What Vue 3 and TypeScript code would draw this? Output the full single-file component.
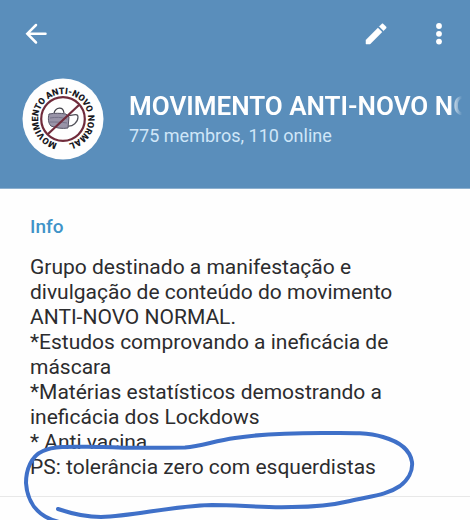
<script setup lang="ts">
interface Group {
  name: string
  members: number
  online: number
  description: string[]
}

const group: Group = {
  name: 'MOVIMENTO ANTI-NOVO NORMAL',
  members: 775,
  online: 110,
  description: [
    'Grupo destinado a manifestação e',
    'divulgação de conteúdo do movimento',
    'ANTI-NOVO NORMAL.',
    '*Estudos comprovando a ineficácia de',
    'máscara',
    '*Matérias estatísticos demostrando a',
    'ineficácia dos Lockdows',
    '* Anti vacina',
    'PS: tolerância zero com esquerdistas',
  ],
}
</script>

<template>
  <div class="page">
    <header class="header">
      <nav class="toolbar">
        <button class="icon-button" type="button" aria-label="Voltar">
          <svg class="icon" viewBox="0 0 28 28">
            <path d="M23.500 13.700H5.500M14 5 5.300 13.700 14 22.500" fill="none" stroke="#fff" stroke-width="2.500" stroke-linecap="round" />
          </svg>
        </button>
        <div class="actions">
          <button class="icon-button" type="button" aria-label="Editar">
            <svg class="icon" viewBox="0 0 28 28">
              <path
                d="M4 19.900V24h4.100L20 12.100 15.900 8zM23.800 8.400c.5-.5.5-1.300 0-1.800l-2.400-2.400c-.5-.5-1.300-.5-1.800 0l-2.300 2.300 4.200 4.200z"
                fill="#fff"
                stroke="#fff"
                stroke-width=".5"
                stroke-linejoin="round"
              />
            </svg>
          </button>
          <button class="icon-button" type="button" aria-label="Mais opções">
            <svg class="icon" viewBox="0 0 28 28" fill="#fff">
              <circle cx="14" cy="6" r="2.900" />
              <circle cx="14" cy="13.800" r="2.900" />
              <circle cx="14" cy="21.600" r="2.900" />
            </svg>
          </button>
        </div>
      </nav>

      <div class="profile">
        <svg class="avatar" viewBox="0 0 82 82">
          <defs>
            <path id="badge-ring" d="M35.300 65.300A25 25 0 1 1 46.200 65.500" />
          </defs>
          <circle cx="41" cy="41" r="40.500" fill="#fefefe" />
          <text class="badge-text">
            <textPath href="#badge-ring">MOVIMENTO ANTI-NOVO NORMAL</textPath>
          </text>
          <path d="M32 35c2-6 9-7 10 0" fill="none" stroke="#404048" stroke-width="1.200" />
          <path d="M46 38c5-1 10-3 10 1 0 5-5 10-11 9" fill="none" stroke="#505058" stroke-width="1.200" />
          <path d="M27 36c6-1 11-1 17 0l3 3-1 11c-6 1-12 0-17-2-3-3-3-8-2-12z" fill="#9994a8" stroke="#565365" />
          <path d="M28 40c6-1 11-1 17 1M28 44c6 0 11 0 17 1" fill="none" stroke="#77738a" />
          <g fill="none" stroke="#702b3b" stroke-width="2.200">
            <circle cx="41" cy="41" r="21.800" />
            <path d="m26 56 31-29" />
          </g>
        </svg>
        <div class="identity">
          <h1 class="name">{{ group.name }}</h1>
          <p class="status">{{ group.members }} membros, {{ group.online }} online</p>
        </div>
      </div>
    </header>

    <main class="content">
      <section class="info">
        <h2 class="info-title">Info</h2>
        <p class="description">
          <span v-for="line in group.description" :key="line" class="line">{{ line }}</span>
        </p>
      </section>
      <svg class="marker" viewBox="0 189 470 331" aria-hidden="true">
        <path
          d="M58 509C73 514 87 517 101 517C135 516 170 506 212 505C239 505 263 508 292 507C315 507 333 505 350 501C371 496 387 495 400 486C408 480 413 471 412 462C410 449 397 441 383 437C366 432 347 433 322 433C291 433 260 434 235 438C214 441 202 446 185 447.500C155 448 125 448 103 447C78 447 55 445 43 451C31 456 26 470 26 483C27 499 35 516 59 522"
        />
      </svg>
    </main>
  </div>
</template>

<style>
body {
  margin: 0;
}
</style>

<style scoped>
.page {
  display: flex;
  flex-direction: column;
  min-height: 100vh;
  background: #fefefe;
  font-family: Roboto, "Liberation Sans", sans-serif;
}

.header {
  padding: 20px 8px 28px 22px;
  border-bottom: 1px solid #8db0cf;
  background: #5a8ebb;
}

.toolbar {
  display: flex;
  justify-content: space-between;
}

.actions {
  display: flex;
  gap: 35px;
  padding-right: 9px;
}

.icon-button {
  display: flex;
  padding: 0;
  border: 0;
  background: none;
  cursor: pointer;
}

.icon {
  width: 28px;
  height: 28px;
}

.profile {
  display: flex;
  align-items: center;
  gap: 25px;
  margin-top: 30px;
}

.avatar {
  flex: none;
  width: 82px;
  height: 82px;
}

.badge-text {
  fill: #17171c;
  font: 900 9px Roboto, sans-serif;
}

.identity {
  flex: 1;
  min-width: 0;
  padding-top: 2px;
}

.name {
  margin: 0;
  overflow: hidden;
  color: #fff;
  font-size: 26px;
  font-weight: 600;
  line-height: 32px;
  white-space: nowrap;
  mask-image: linear-gradient(to left, transparent, #000 12px);
}

.status {
  margin: 0;
  color: #cfe6f8;
  font-size: 18px;
  line-height: 28px;
}

.content {
  position: relative;
  flex: 1;
  overflow: hidden;
}

.info {
  padding: 25px 30px 16px;
  border-bottom: 1px solid #e8e8e8;
}

.info-title {
  margin: 0;
  color: #4093c8;
  font-size: 19px;
  font-weight: 500;
  line-height: 26px;
}

.description {
  margin: 15px 0 0;
  color: #2c2c2e;
  font-size: 21px;
  line-height: 25px;
}

.line {
  display: block;
}

.marker {
  position: absolute;
  top: 0;
  left: 0;
  width: 470px;
  height: 331px;
  fill: none;
  stroke: #3f70c8;
  stroke-width: 4px;
  stroke-linecap: round;
  pointer-events: none;
}
</style>
